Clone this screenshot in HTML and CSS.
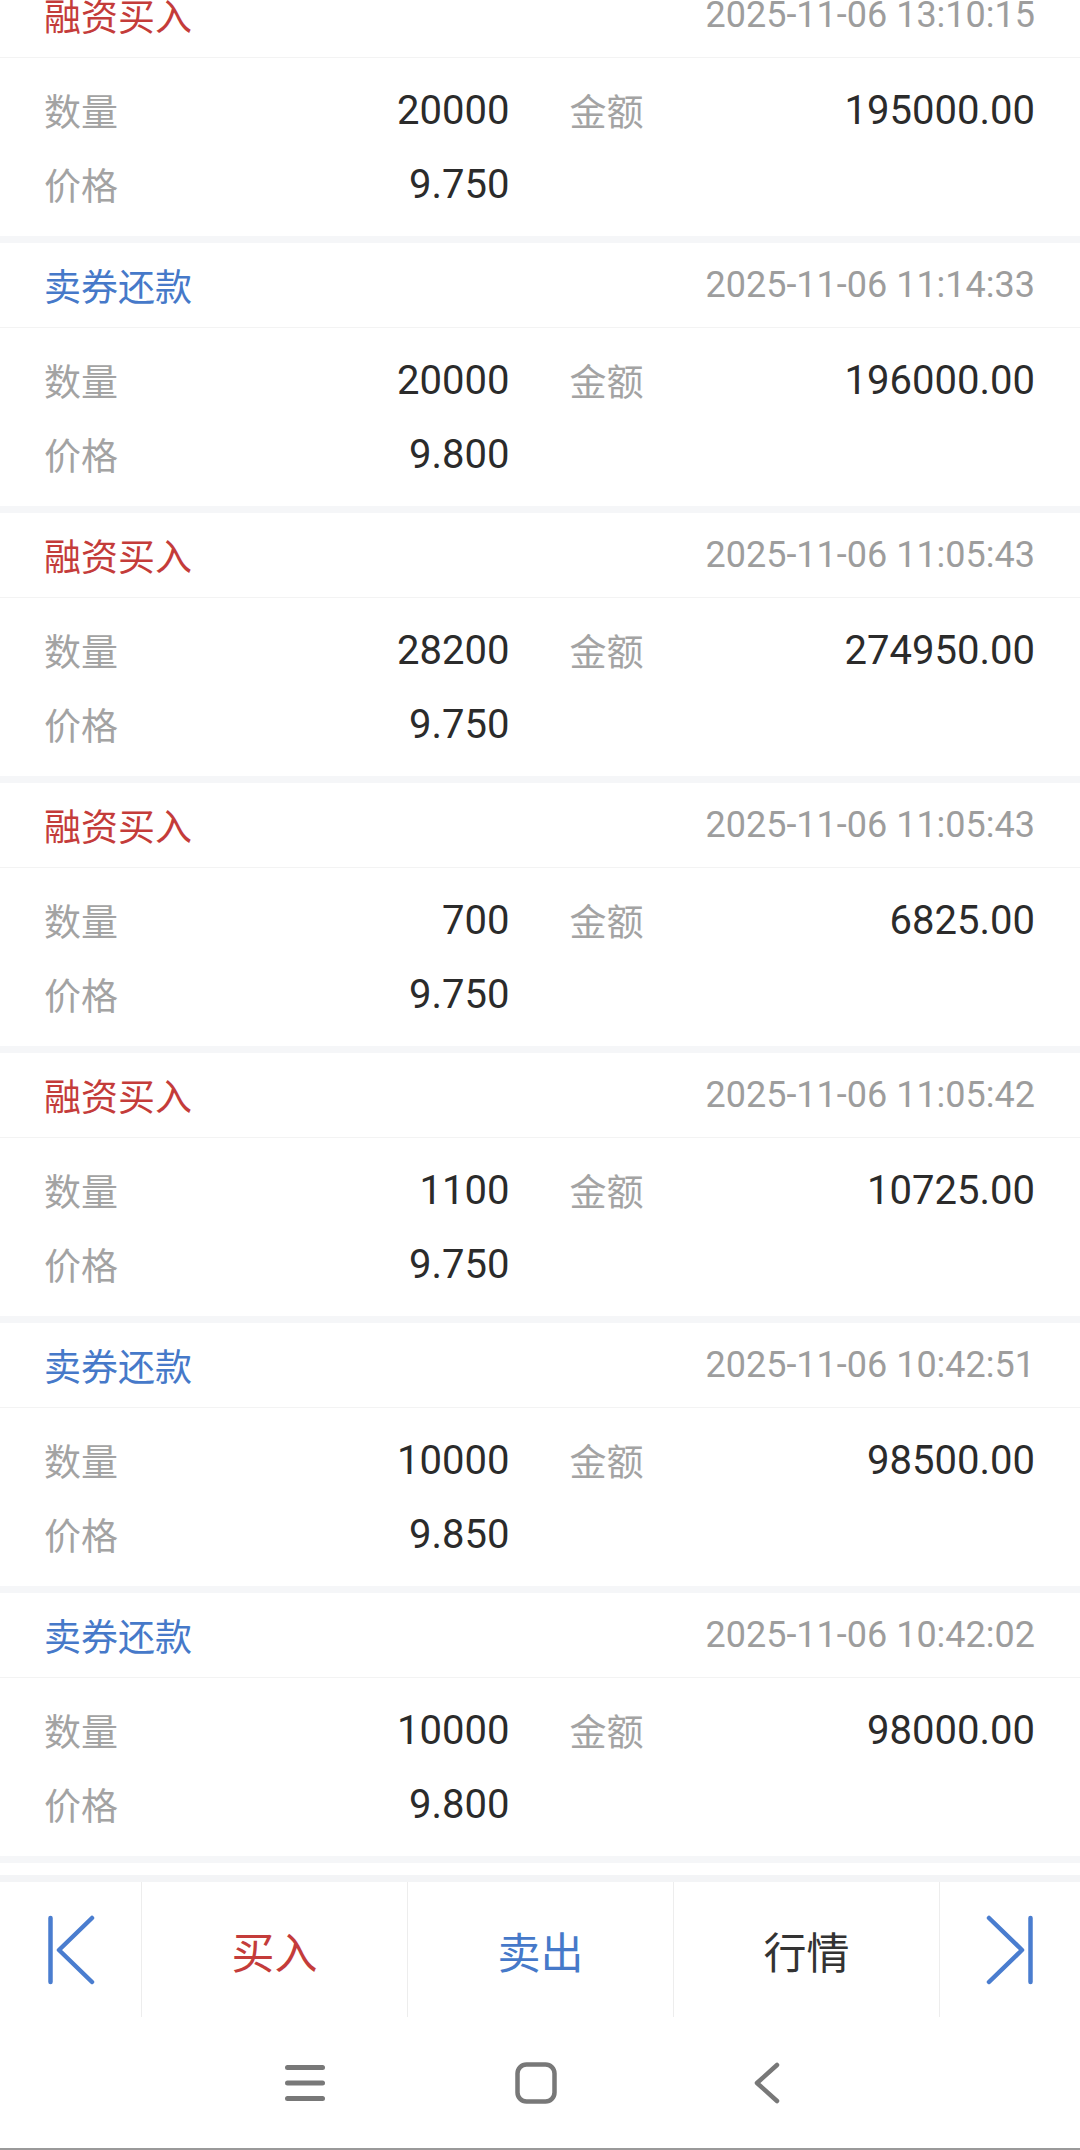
FILE: index.html
```html
<!DOCTYPE html>
<html lang="zh-CN">
<head>
    <meta charset="UTF-8">
    <title>委托明细</title>
    <link rel="stylesheet" href="styles.css">
</head>
<body>
    <div class="page">
        <div class="list_wrap">
            <div class="list">
                <div class="card">
                    <div class="card_head"><span class="type buy">融资买入</span><span class="time">2025-11-06 13:10:15</span></div>
                    <div class="card_body">
                        <div class="cell"><span class="label">数量</span><span class="val">20000</span></div>
                        <div class="cell"><span class="label">金额</span><span class="val">195000.00</span></div>
                        <div class="cell"><span class="label">价格</span><span class="val">9.750</span></div>
                    </div>
                </div>
                <div class="card">
                    <div class="card_head"><span class="type sell">卖券还款</span><span class="time">2025-11-06 11:14:33</span></div>
                    <div class="card_body">
                        <div class="cell"><span class="label">数量</span><span class="val">20000</span></div>
                        <div class="cell"><span class="label">金额</span><span class="val">196000.00</span></div>
                        <div class="cell"><span class="label">价格</span><span class="val">9.800</span></div>
                    </div>
                </div>
                <div class="card">
                    <div class="card_head"><span class="type buy">融资买入</span><span class="time">2025-11-06 11:05:43</span></div>
                    <div class="card_body">
                        <div class="cell"><span class="label">数量</span><span class="val">28200</span></div>
                        <div class="cell"><span class="label">金额</span><span class="val">274950.00</span></div>
                        <div class="cell"><span class="label">价格</span><span class="val">9.750</span></div>
                    </div>
                </div>
                <div class="card">
                    <div class="card_head"><span class="type buy">融资买入</span><span class="time">2025-11-06 11:05:43</span></div>
                    <div class="card_body">
                        <div class="cell"><span class="label">数量</span><span class="val">700</span></div>
                        <div class="cell"><span class="label">金额</span><span class="val">6825.00</span></div>
                        <div class="cell"><span class="label">价格</span><span class="val">9.750</span></div>
                    </div>
                </div>
                <div class="card">
                    <div class="card_head"><span class="type buy">融资买入</span><span class="time">2025-11-06 11:05:42</span></div>
                    <div class="card_body">
                        <div class="cell"><span class="label">数量</span><span class="val">1100</span></div>
                        <div class="cell"><span class="label">金额</span><span class="val">10725.00</span></div>
                        <div class="cell"><span class="label">价格</span><span class="val">9.750</span></div>
                    </div>
                </div>
                <div class="card">
                    <div class="card_head"><span class="type sell">卖券还款</span><span class="time">2025-11-06 10:42:51</span></div>
                    <div class="card_body">
                        <div class="cell"><span class="label">数量</span><span class="val">10000</span></div>
                        <div class="cell"><span class="label">金额</span><span class="val">98500.00</span></div>
                        <div class="cell"><span class="label">价格</span><span class="val">9.850</span></div>
                    </div>
                </div>
                <div class="card">
                    <div class="card_head"><span class="type sell">卖券还款</span><span class="time">2025-11-06 10:42:02</span></div>
                    <div class="card_body">
                        <div class="cell"><span class="label">数量</span><span class="val">10000</span></div>
                        <div class="cell"><span class="label">金额</span><span class="val">98000.00</span></div>
                        <div class="cell"><span class="label">价格</span><span class="val">9.800</span></div>
                    </div>
                </div>
            </div>
        </div>

        <!-- 底部操作栏 -->
        <div class="tool_bar">
            <div class="tool_item">
                <svg width="50" height="70" viewBox="0 0 50 70">
                    <line x1="4.5" y1="3" x2="4.5" y2="67" />
                    <polyline points="46,3 13,35 46,67" />
                </svg>
            </div>
            <div class="tool_item buy">买入</div>
            <div class="tool_item sell">卖出</div>
            <div class="tool_item">行情</div>
            <div class="tool_item">
                <svg width="50" height="70" viewBox="0 0 50 70">
                    <line x1="45.5" y1="3" x2="45.5" y2="67" />
                    <polyline points="4,3 37,35 4,67" />
                </svg>
            </div>
        </div>

        <!-- 系统导航 -->
        <div class="nav_bar">
            <svg class="nav_menu" width="40" height="36" viewBox="0 0 40 36">
                <line x1="2.5" y1="2.5" x2="37.5" y2="2.5" />
                <line x1="2.5" y1="18" x2="37.5" y2="18" />
                <line x1="2.5" y1="33.5" x2="37.5" y2="33.5" />
            </svg>
            <svg class="nav_home" width="42" height="42" viewBox="0 0 42 42">
                <rect x="2.5" y="2.5" width="37" height="37" rx="9" />
            </svg>
            <svg class="nav_back" width="28" height="42" viewBox="0 0 28 42">
                <polyline points="24,3 4,21 24,39" />
            </svg>
        </div>
    </div>
</body>
</html>
```

FILE: styles.css
```css
* {
    margin: 0;
    padding: 0;
    box-sizing: border-box;
}
body {
    background-color: #fff;
    font-family: Roboto, "Noto Sans CJK SC", sans-serif;
    color: #333;
}
.page {
    height: 2150px;
    display: flex;
    flex-direction: column;
}
.list_wrap {
    flex: 1;
    overflow: hidden;
}
.list {
    margin-top: -27px;
}

.card {
    border-bottom: 7px solid #f5f6f8;
}
.card .card_head {
    height: 85px;
    padding: 0 45px 0 44px;
    display: flex;
    justify-content: space-between;
    align-items: center;
    border-bottom: 1px solid #f3f3f3;
}
.card .type {
    font-size: 37px;
}
.type.buy {
    color: #c43c3a;
}
.type.sell {
    color: #4679c9;
}
.card .time {
    font-size: 36px;
    color: #9d9d9d;
}
.card .card_body {
    padding: 15px 45px 15px 44px;
    display: grid;
    grid-template-columns: 1fr 1fr;
    grid-auto-rows: 74px;
    column-gap: 60px;
}
.card .cell {
    display: flex;
    justify-content: space-between;
    align-items: center;
}
.card .label {
    font-size: 37px;
    color: #a3a3a3;
}
.card .val {
    font-size: 40px;
    color: #2b2b2b;
}

.tool_bar {
    height: 142px;
    border-top: 7px solid #f3f4f6;
    display: grid;
    grid-template-columns: 141px 1fr 1fr 1fr 141px;
}
.tool_bar .tool_item {
    display: flex;
    justify-content: center;
    align-items: center;
    font-size: 43px;
    color: #333;
    border-left: 1px solid #ededed;
}
.tool_bar .tool_item:first-child {
    border-left: none;
}
.tool_item.buy {
    color: #c43c3a;
}
.tool_item.sell {
    color: #4679c9;
}
.tool_item svg {
    fill: none;
    stroke: #4a7dcf;
    stroke-width: 4.5;
    stroke-linecap: round;
    stroke-linejoin: round;
}

.nav_bar {
    height: 133px;
    display: flex;
    align-items: center;
    padding-left: 285px;
    border-bottom: 2px solid #9a9a9a;
}
.nav_bar svg {
    fill: none;
    stroke: #787878;
    stroke-width: 4.5;
    stroke-linecap: round;
    stroke-linejoin: round;
}
.nav_bar .nav_menu {
    stroke-width: 5;
}
.nav_bar .nav_home {
    margin-left: 190px;
}
.nav_bar .nav_back {
    margin-left: 196px;
}
```
